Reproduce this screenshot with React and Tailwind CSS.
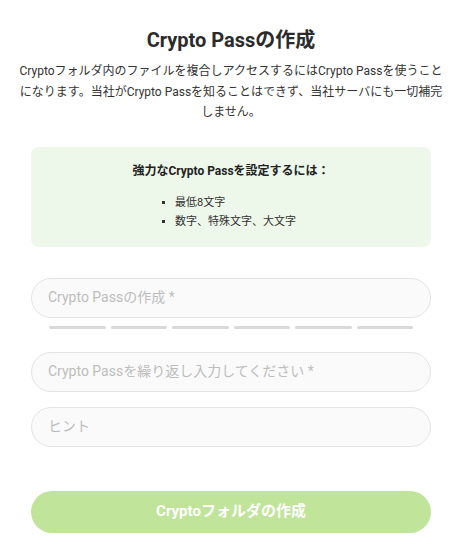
export default function App() {
  const bars = [0, 1, 2, 3, 4, 5];

  return (
    <div className="min-h-screen bg-white text-[#333] font-['Roboto','Noto_Sans_CJK_JP',sans-serif]">
      <div className="w-[462px]">
        <div className="px-[18px] pt-[26px] text-center">
          <h1 className="text-[20px] font-bold leading-[28px] text-[#2b2b2b]">Crypto Passの作成</h1>
          <p className="mt-[7px] text-[12px] leading-[20.5px]">
            Cryptoフォルダ内のファイルを複合しアクセスするにはCrypto Passを使うことになります。当社がCrypto Passを知ることはできず、当社サーバにも一切補完しません。
          </p>
        </div>

        <div className="mx-[31px] mt-[24px] rounded-[8px] bg-[#edf7ea] pt-[15px] pb-[17px]">
          <p className="text-center text-[12px] font-bold leading-[18px] text-[#222]">強力なCrypto Passを設定するには：</p>
          <ul className="mt-[14px] flex flex-col gap-[2px] pl-[131px] text-[11px] leading-[17px] text-[#333]">
            <li className="flex items-center gap-[10px]">
              <span className="h-[3px] w-[3px] bg-[#333]" />
              最低8文字
            </li>
            <li className="flex items-center gap-[10px]">
              <span className="h-[3px] w-[3px] bg-[#333]" />
              数字、特殊文字、大文字
            </li>
          </ul>
        </div>

        <div className="mx-[31px] mt-[31px] flex flex-col">
          <div className="flex h-[40px] items-center rounded-full border border-[#e4e4e4] bg-[#fafafa] px-[16px] text-[14px] text-[#bdbdbd]">
            Crypto Passの作成 *
          </div>
          <div className="mx-[18px] mt-[8px] flex gap-[5px]">
            {bars.map((b) => (
              <div key={b} className="h-[3px] flex-1 rounded-full bg-[#d9d9d9]" />
            ))}
          </div>
          <div className="mt-[23px] flex h-[40px] items-center rounded-full border border-[#e4e4e4] bg-[#fafafa] px-[16px] text-[14px] text-[#bdbdbd]">
            Crypto Passを繰り返し入力してください *
          </div>
          <div className="mt-[15px] flex h-[40px] items-center rounded-full border border-[#e4e4e4] bg-[#fafafa] px-[16px] text-[14px] text-[#bdbdbd]">
            ヒント
          </div>
          <button className="mt-[44px] flex h-[42px] items-center justify-center rounded-full bg-[#c0e49a] text-[15px] font-bold text-white">
            Cryptoフォルダの作成
          </button>
        </div>
      </div>
    </div>
  );
}
